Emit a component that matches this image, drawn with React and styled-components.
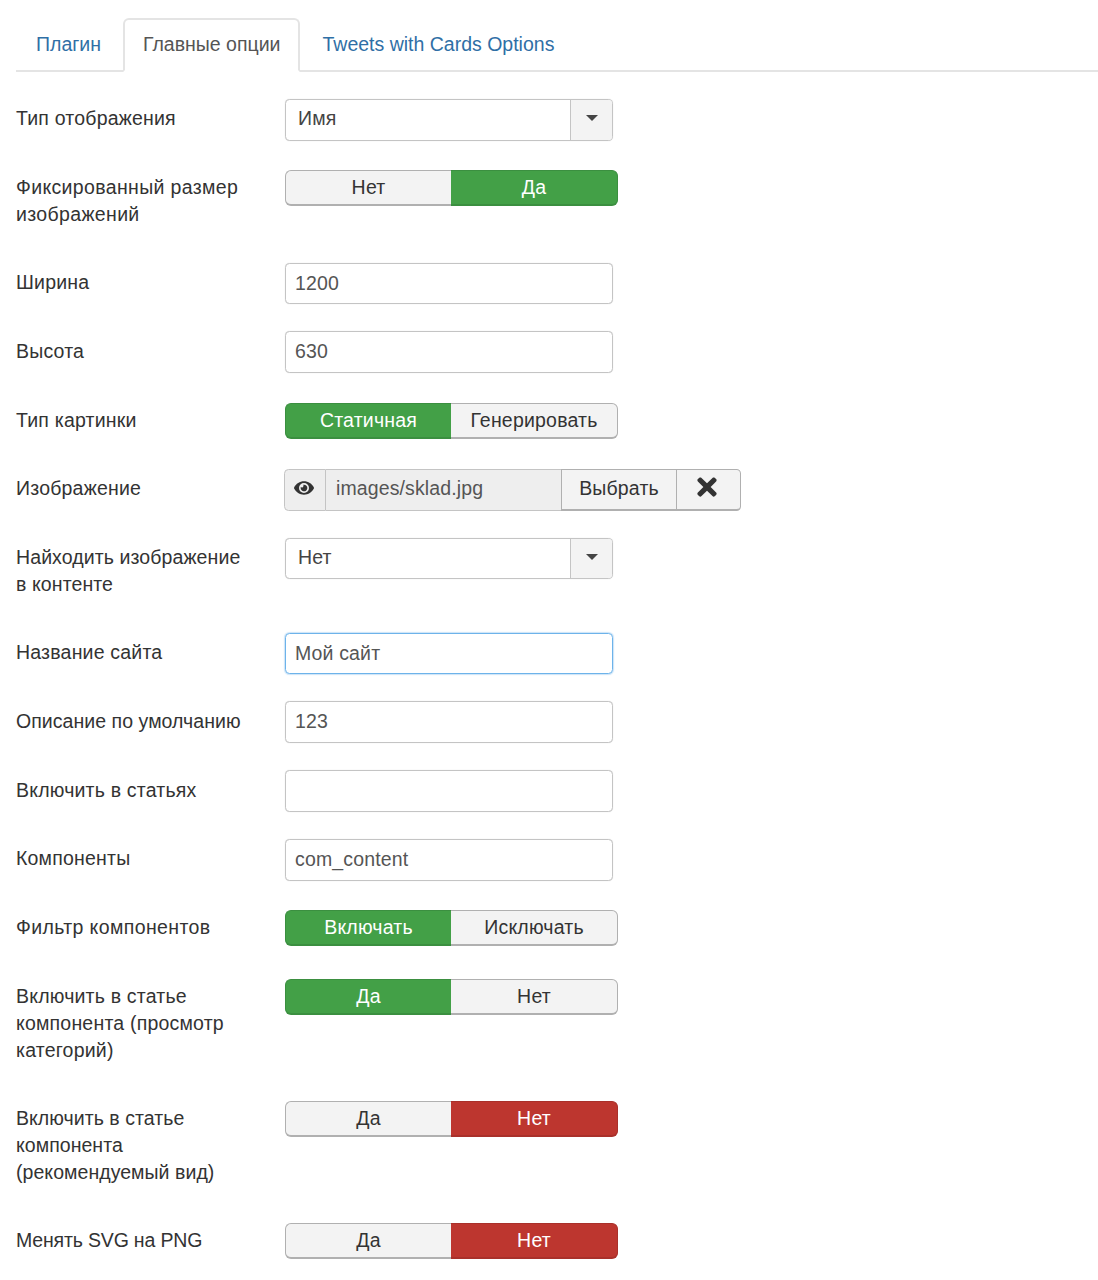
import styled, { createGlobalStyle } from "styled-components";
import { FaEye, FaTimes } from "react-icons/fa";

const GlobalStyle = createGlobalStyle`
  html, body {
    margin: 0;
    padding: 0;
    background: #fff;
  }
  body {
    font-family: "Liberation Sans", Arial, sans-serif;
    font-size: 19.5px;
    line-height: 27px;
    color: #333;
  }
`;

const tabs = [
  { name: "Плагин" },
  { name: "Главные опции", active: true },
  { name: "Tweets with Cards Options" },
];

const fields = [
  { label: "Тип отображения", type: "select", value: "Имя" },
  { label: "Фиксированный размер изображений", type: "toggle", options: ["Нет", "Да"], on: 1, color: "green", spacing: 0.35 },
  { label: "Ширина", type: "input", value: "1200" },
  { label: "Высота", type: "input", value: "630" },
  { label: "Тип картинки", type: "toggle", options: ["Статичная", "Генерировать"], on: 0, color: "green" },
  { label: "Изображение", type: "media", value: "images/sklad.jpg" },
  { label: "Найходить изображение в контенте", type: "select", value: "Нет", spacing: 0.1 },
  { label: "Название сайта", type: "input", value: "Мой сайт", focused: true },
  { label: "Описание по умолчанию", type: "input", value: "123", spacing: 0.05 },
  { label: "Включить в статьях", type: "input", value: "" },
  { label: "Компоненты", type: "input", value: "com_content" },
  { label: "Фильтр компонентов", type: "toggle", options: ["Включать", "Исключать"], on: 0, color: "green", spacing: 0.38 },
  { label: "Включить в статье компонента (просмотр категорий)", type: "toggle", options: ["Да", "Нет"], on: 0, color: "green" },
  { label: "Включить в статье компонента (рекомендуемый вид)", type: "toggle", options: ["Да", "Нет"], on: 1, color: "red", spacing: 0.05 },
  { label: "Менять SVG на PNG", type: "toggle", options: ["Да", "Нет"], on: 1, color: "red", spacing: -0.17 },
];

const renderControl = (field) => {
  if (field.type === "select") {
    return (
      <SelectBox>
        <SelectValue>{field.value}</SelectValue>
        <SelectArrow>
          <Caret />
        </SelectArrow>
      </SelectBox>
    );
  }
  if (field.type === "toggle") {
    return (
      <ToggleGroup>
        {field.options.map((option, index) => (
          <ToggleButton key={index} $active={field.on === index} $color={field.color}>
            {option}
          </ToggleButton>
        ))}
      </ToggleGroup>
    );
  }
  if (field.type === "media") {
    return (
      <MediaGroup>
        <MediaPreview>
          <FaEye size={20} />
        </MediaPreview>
        <MediaPath>{field.value}</MediaPath>
        <MediaSelect>Выбрать</MediaSelect>
        <MediaClear>
          <FaTimes size={28} />
        </MediaClear>
      </MediaGroup>
    );
  }
  return <TextInput readOnly value={field.value} $focused={field.focused} />;
};

const App = () => {
  return (
    <Page>
      <GlobalStyle />
      <TabBar>
        {tabs.map((tab) => (
          <Tab key={tab.name} $active={tab.active}>
            {tab.name}
          </Tab>
        ))}
      </TabBar>
      <Form>
        {fields.map((field) => (
          <Row key={field.label}>
            <Label $spacing={field.spacing ?? 0.2}>{field.label}</Label>
            <Control>{renderControl(field)}</Control>
          </Row>
        ))}
      </Form>
    </Page>
  );
};

export default App;

/* Styled Components */
const Page = styled.div`
  padding: 18px 0 0 16px;
  height: 1262px;
  overflow: hidden;
`;

const TabBar = styled.div`
  display: flex;
  height: 54px;
  border-bottom: 2px solid #e4e4e4;
  box-sizing: border-box;
`;

const Tab = styled.div`
  box-sizing: border-box;
  height: 54px;
  margin-right: 2px;
  padding: 11px 18px 0 18px;
  color: ${(props) => (props.$active ? "#555" : "#2f6fa6")};
  background: ${(props) => (props.$active ? "#fff" : "transparent")};
  border: 2px solid ${(props) => (props.$active ? "#e4e4e4" : "transparent")};
  border-bottom-color: ${(props) => (props.$active ? "#fff" : "transparent")};
  border-radius: 6px 6px 0 0;
`;

const Form = styled.div`
  display: flex;
  flex-direction: column;
  gap: 27px;
  padding-top: 27px;
`;

const Row = styled.div`
  display: flex;
  align-items: flex-start;
  min-height: 41.75px;
`;

const Label = styled.div`
  box-sizing: border-box;
  width: 269px;
  padding: 6.4px 37px 7.6px 0;
  flex-shrink: 0;
  letter-spacing: ${(props) => props.$spacing}px;
`;

const Control = styled.div`
  flex: 1;
`;

const TextInput = styled.input`
  display: block;
  box-sizing: border-box;
  width: 328px;
  height: 41.75px;
  padding: 0 9px 1px;
  font: inherit;
  letter-spacing: 0.15px;
  color: #555;
  background: #fff;
  border: 1px solid ${(props) => (props.$focused ? "#6db3ea" : "#c4c4c4")};
  border-radius: 4.5px;
  outline: none;
  box-shadow: ${(props) =>
    props.$focused ? "0 0 1px 1px rgba(109, 179, 234, 0.35)" : "0 0 1px rgba(0, 0, 0, 0.18)"};
`;

const SelectBox = styled.div`
  display: flex;
  box-sizing: border-box;
  width: 328px;
  height: 41.75px;
  background: #fff;
  border: 1px solid #c4c4c4;
  border-radius: 4.5px;
  box-shadow: 0 0 1px rgba(0, 0, 0, 0.18);
`;

const SelectValue = styled.div`
  flex: 1;
  padding: 5px 0 0 12px;
  color: #444;
  letter-spacing: 0.15px;
`;

const SelectArrow = styled.div`
  display: flex;
  align-items: center;
  justify-content: center;
  width: 41px;
  background: #f3f3f3;
  border-left: 1px solid #c4c4c4;
  border-radius: 0 3px 3px 0;
`;

const Caret = styled.span`
  margin-top: -3px;
  border-top: 6px solid #444;
  border-left: 6px solid transparent;
  border-right: 6px solid transparent;
`;

const ToggleGroup = styled.div`
  display: flex;
  width: 333px;
  height: 36px;
  margin-top: 2.5px;
`;

const ToggleButton = styled.div`
  display: flex;
  align-items: center;
  justify-content: center;
  box-sizing: border-box;
  letter-spacing: 0.2px;
  color: ${(props) => (props.$active ? "#fff" : "#333")};
  background: ${(props) =>
    props.$active ? (props.$color === "red" ? "#bd362f" : "#43a047") : "#f3f3f3"};
  border: 1px solid
    ${(props) => (props.$active ? (props.$color === "red" ? "#a9302a" : "#3b8f40") : "#b0b0b0")};
  border-bottom-width: 2px;

  &:first-child {
    flex: 0 0 166px;
    border-radius: 6px 0 0 6px;
    border-right: none;
  }
  &:last-child {
    flex: 1;
    border-radius: 0 6px 6px 0;
    border-left: none;
  }
`;

const MediaGroup = styled.div`
  display: flex;
  height: 41.75px;
  margin-left: -1px;
`;

const MediaPreview = styled.div`
  display: flex;
  align-items: center;
  justify-content: center;
  box-sizing: border-box;
  width: 42px;
  padding: 0 3px 4px 0;
  color: #333;
  background: #eee;
  border: 1px solid #c4c4c4;
  border-radius: 4.5px 0 0 4.5px;
`;

const MediaPath = styled.div`
  box-sizing: border-box;
  width: 235px;
  padding: 5px 0 0 10px;
  letter-spacing: 0.12px;
  color: #555;
  background: #eee;
  border: 1px solid #c4c4c4;
  border-left: none;
  border-right: none;
`;

const MediaSelect = styled.div`
  display: flex;
  align-items: center;
  justify-content: center;
  box-sizing: border-box;
  width: 115px;
  padding-bottom: 1px;
  color: #333;
  letter-spacing: 0.15px;
  background: #f3f3f3;
  border: 1px solid #b0b0b0;
  border-bottom-width: 2px;
  border-right: none;
`;

const MediaClear = styled.div`
  display: flex;
  align-items: center;
  justify-content: center;
  box-sizing: border-box;
  width: 65px;
  padding: 0 3px 4px 0;
  color: #333;
  background: #f3f3f3;
  border: 1px solid #b0b0b0;
  border-bottom-width: 2px;
  border-radius: 0 4.5px 4.5px 0;
`;
